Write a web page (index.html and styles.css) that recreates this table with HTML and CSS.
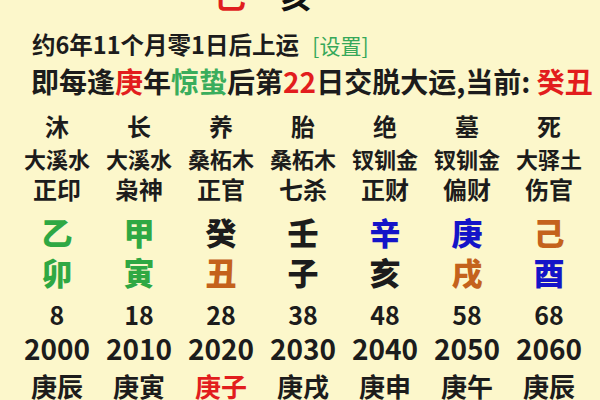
FILE: index.html
```html
<!DOCTYPE html>
<html lang="zh">
<head>
<meta charset="utf-8">
<link rel="stylesheet" href="styles.css">
</head>
<body>
<div class="page">
  <div class="top"><div class="top-inner"><span class="red">己</span><span class="blk">亥</span></div></div>
  <div class="line1">约6年11个月零1日后上运 <span class="set">[设置]</span></div>
  <div class="line2">即每逢<span class="red">庚</span>年<span class="lgreen">惊蛰</span>后第<span class="red">22</span>日交脱大运,当前: <span class="red">癸丑</span></div>

  <div class="row r1"><span>沐</span><span>长</span><span>养</span><span>胎</span><span>绝</span><span>墓</span><span>死</span></div>
  <div class="row r2"><span>大溪水</span><span>大溪水</span><span>桑柘木</span><span>桑柘木</span><span>钗钏金</span><span>钗钏金</span><span>大驿土</span></div>
  <div class="row r3"><span>正印</span><span>枭神</span><span>正官</span><span>七杀</span><span>正财</span><span>偏财</span><span>伤官</span></div>
  <div class="row r4"><span class="green">乙</span><span class="green">甲</span><span>癸</span><span>壬</span><span class="blue">辛</span><span class="blue">庚</span><span class="brown">己</span></div>
  <div class="row r5"><span class="green">卯</span><span class="green">寅</span><span class="brown">丑</span><span>子</span><span>亥</span><span class="brown">戌</span><span class="blue">酉</span></div>
  <div class="row r6"><span>8</span><span>18</span><span>28</span><span>38</span><span>48</span><span>58</span><span>68</span></div>
  <div class="row r7"><span>2000</span><span>2010</span><span>2020</span><span>2030</span><span>2040</span><span>2050</span><span>2060</span></div>
  <div class="row r8"><span>庚辰</span><span>庚寅</span><span class="red">庚子</span><span>庚戌</span><span>庚申</span><span>庚午</span><span>庚辰</span></div>
</div>
</body>
</html>
```

FILE: styles.css
```css
html, body {
  margin: 0;
  padding: 0;
  background: #fcf7cb;
}
body {
  width: 600px;
  height: 400px;
  overflow: hidden;
  font-family: "Noto Sans CJK SC", "Noto Sans", sans-serif;
  color: #1c1c1c;
}
.page {
  display: flex;
  flex-direction: column;
}
.top {
  height: 12px;
  overflow: hidden;
}
.top-inner {
  margin-top: -24px;
  display: flex;
  gap: 34px;
  padding-left: 214px;
  font-size: 32px;
  line-height: 36px;
  font-weight: 700;
}
.top-inner .red { color: #e01e1e; }
.top-inner .blk { color: #111; }

.line1 {
  margin-top: 17px;
  padding-left: 32px;
  font-size: 23.5px;
  line-height: 30px;
  font-weight: 700;
  white-space: nowrap;
}
.set {
  font-size: 21px;
  font-weight: 400;
  color: #36a85a;
  margin-left: 8px;
}
.line2 {
  margin-top: 4px;
  padding-left: 31px;
  font-size: 28px;
  line-height: 34px;
  font-weight: 700;
  white-space: nowrap;
}
.red { color: #e21d1d; }
.lgreen { color: #3aad5c; }

.row {
  display: grid;
  grid-template-columns: repeat(7, 82px);
  padding-left: 16px;
  height: 32px;
  line-height: 32px;
  text-align: center;
  white-space: nowrap;
  font-weight: 700;
}
.r1 { margin-top: 12px; font-size: 24px; }
.r2 { margin-top: 0; font-size: 22px; }
.r3 { margin-top: -1px; font-size: 24px; }
.r4 { margin-top: 11px; font-size: 31px; font-weight: 900; }
.r5 { margin-top: 8px; font-size: 31px; font-weight: 900; }
.r6 { margin-top: 10px; font-size: 25px; }
.r7 { margin-top: 2px; font-size: 28px; }
.r8 { margin-top: 6px; font-size: 26px; }

.green { color: #2fa843; }
.blue { color: #1414c8; }
.brown { color: #c4621c; }
```
